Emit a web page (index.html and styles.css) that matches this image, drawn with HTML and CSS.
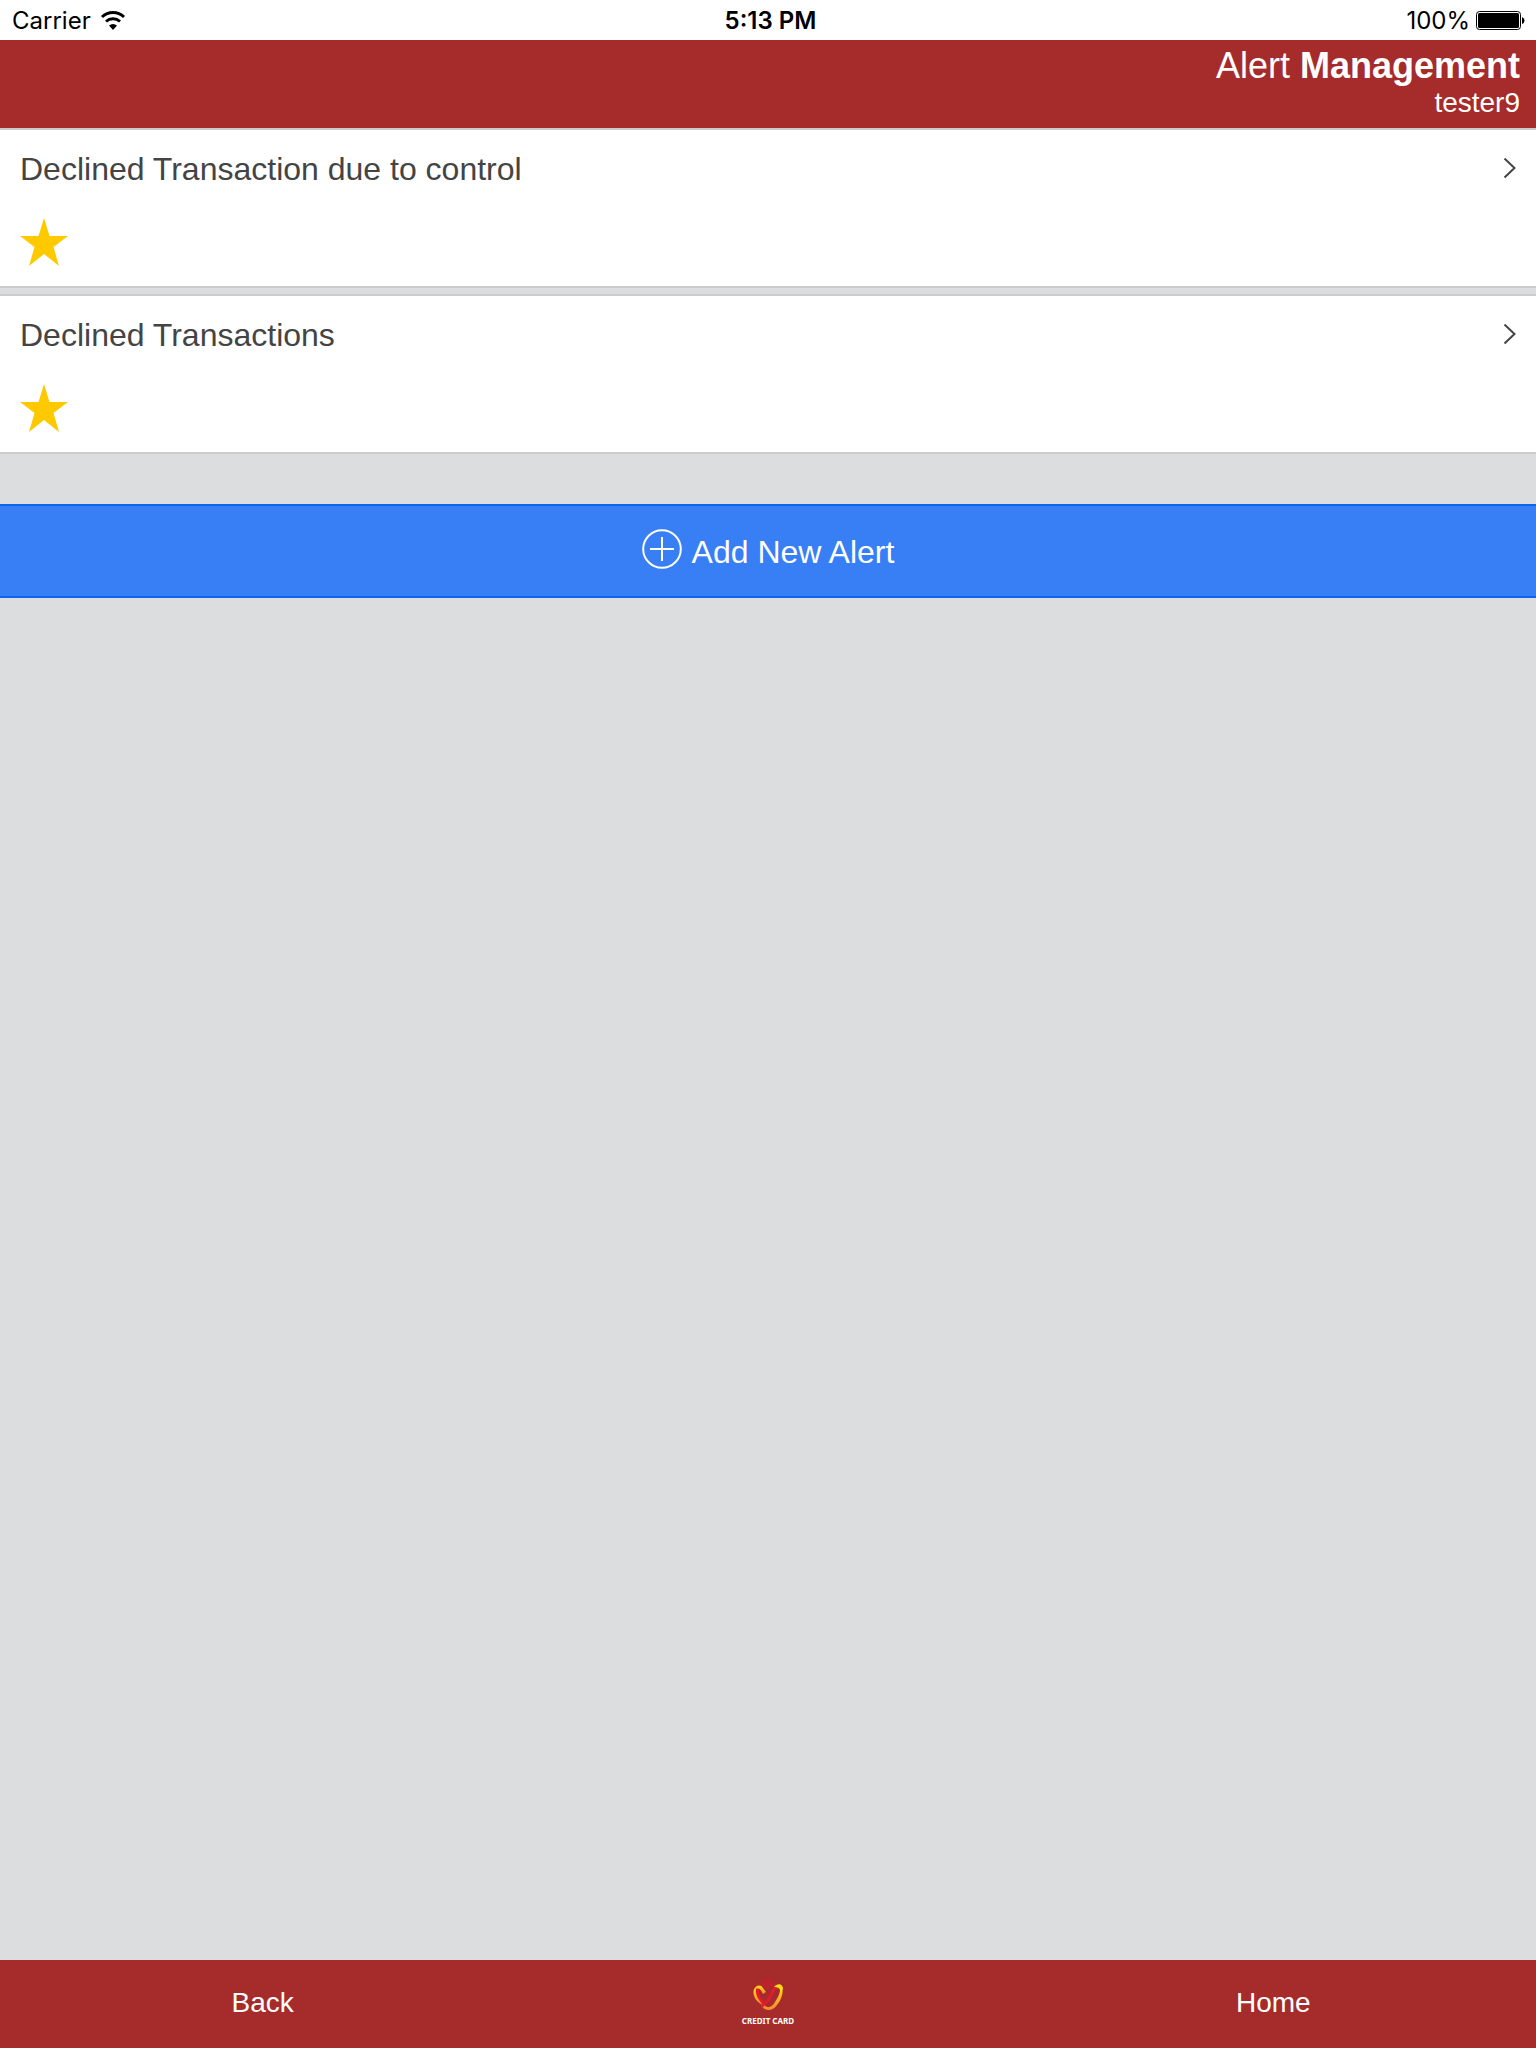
FILE: index.html
```html
<!DOCTYPE html>
<html lang="en">
  <head>
    <meta charset="UTF-8" />
    <meta name="viewport" content="width=device-width, initial-scale=1.0"/>
    <title>Alert Management</title>
    <link rel="stylesheet" href="styles.css">
  </head>
  <body>
    <div class="status-bar">
      <div class="status-left">
        <span>Carrier</span>
        <svg class="wifi" viewBox="0 0 26 20" aria-hidden="true">
          <path d="M2 6A16 16 0 0 1 24 6" fill="none" stroke="#000" stroke-width="3"/>
          <path d="M6 10.500A10.500 10.500 0 0 1 20 10.500" fill="none" stroke="#000" stroke-width="3"/>
          <path d="M9 14.500A6 6 0 0 1 17 14.500L13 19Z"/>
        </svg>
      </div>
      <div class="status-time">5:13 PM</div>
      <div class="status-right">
        <span>100%</span>
        <svg class="battery" viewBox="0 0 50 20" aria-hidden="true">
          <rect x="1.500" y="0.500" width="44" height="18" rx="3" fill="none" stroke="#000"/>
          <rect x="3" y="2" width="41" height="15" rx="1.500"/>
          <path d="M47 6q2.500 1 2.500 3.500t-2.500 3.500z"/>
        </svg>
      </div>
    </div>

    <header class="header">
      <h1>Alert <strong>Management</strong></h1>
      <p class="user">tester9</p>
    </header>

    <main class="content">
      <div class="list">
        <a class="card" href="#">
          <span class="card-top">
            <span class="title">Declined Transaction due to control</span>
            <svg class="chevron" viewBox="0 0 14 22" aria-hidden="true"><path d="M2.500 0.500l10 9.500-10 9.500"/></svg>
          </span>
          <svg class="star" viewBox="0 0 48 48" aria-hidden="true"><path d="M24 0l5.500 18H48L33.500 29 39 48 24 36 9 48l5.500-19L0 18h18.500z"/></svg>
        </a>
        <a class="card" href="#">
          <span class="card-top">
            <span class="title">Declined Transactions</span>
            <svg class="chevron" viewBox="0 0 14 22" aria-hidden="true"><path d="M2.500 0.500l10 9.500-10 9.500"/></svg>
          </span>
          <svg class="star" viewBox="0 0 48 48" aria-hidden="true"><path d="M24 0l5.500 18H48L33.500 29 39 48 24 36 9 48l5.500-19L0 18h18.500z"/></svg>
        </a>
      </div>

      <button class="add-button" type="button">
        <svg class="plus" viewBox="0 0 40 40" aria-hidden="true">
          <circle cx="20" cy="20" r="18.800"/>
          <path d="M20 8v24M8 20h24"/>
        </svg>
        <span>Add New Alert</span>
      </button>
    </main>

    <footer class="footer">
      <a href="#">Back</a>
      <div class="brand">
        <svg class="logo" viewBox="0 0 34 32" aria-hidden="true">
          <defs>
            <linearGradient id="gold" x1="0" y1="0" x2="0" y2="1">
              <stop offset="0" stop-color="#ffdc14"/>
              <stop offset="1" stop-color="#f5892f"/>
            </linearGradient>
          </defs>
          <!-- left ribbon -->
          <path d="M3 9C1 15 5 22 12 25L14 23C8 20 5 15 5 8Z" fill="url(#gold)"/>
          <path d="M5 8C4 16 8 20 12 25L14 23C10 20 7 15 8 8Z" fill="#e8192f"/>
          <path d="M3 10C4 5 10 4 12 8L15 12 12 14C10 9 7 7 3 10Z" fill="url(#gold)"/>
          <!-- right ribbon -->
          <path d="M29 5C34 9 31 19 26 25 22 31 15 32 10 26L13 25C17 29 21 27 24 22 28 16 30 11 29 5Z" fill="url(#gold)"/>
          <path d="M10 27C12 22 16 21 19 14 21 8 25 4 29 5L27 8C23 9 22 15 19 20 17 23 13 24 12 28Z" fill="#e8192f"/>
          <path d="M23 7C26 3 32 3 32 9L29 14C30 9 28 7 23 7Z" fill="#ffdc14"/>
          <g fill="#dc1630">
            <circle cx="14.500" cy="1.500" r="1.400"/><circle cx="18.500" cy="1.500" r="1.400"/>
            <circle cx="12.500" cy="4.500" r="1.400"/><circle cx="20.500" cy="4.500" r="1.400"/>
            <circle cx="16.500" cy="7.500" r="1.400"/>
          </g>
        </svg>
        <span class="brand-name">CREDIT CARD</span>
      </div>
      <a href="#">Home</a>
    </footer>
  </body>
</html>
```
FILE: styles.css
```css
* {
  box-sizing: border-box;
}
body {
  display: flex;
  flex-direction: column;
  min-height: 100vh;
  margin: 0;
  background-color: #dcddde;
  color: #444;
  font-family: "Liberation Sans", Arial, sans-serif;
}
a {
  color: inherit;
  text-decoration: none;
}
svg {
  display: block;
  flex-shrink: 0;
}

/* Status bar */
.status-bar {
  display: flex;
  align-items: center;
  height: 40px;
  padding: 1px 11px 0 12px;
  background-color: #fff;
  color: #000;
  font-family: Inter, sans-serif;
  font-size: 24px;
  line-height: 40px;
}
.status-left,
.status-right {
  display: flex;
  flex: 1;
  align-items: center;
}
.status-left {
  gap: 9px;
}
.status-right {
  justify-content: flex-end;
  gap: 5px;
}
.status-time {
  padding-left: 4px;
  font-weight: 600;
}
.wifi {
  width: 26px;
  height: 20px;
}
.battery {
  width: 50px;
  height: 20px;
}

/* Header */
.header {
  height: 88px;
  padding: 6px 16px 0;
  background-color: #a62b2b;
  color: #fff;
  text-align: right;
}
.header h1 {
  margin: 0;
  font-size: 36px;
  font-weight: normal;
  line-height: 40px;
}
.user {
  margin: 0;
  font-size: 28px;
  line-height: 34px;
}

/* Alerts */
.content {
  flex: 1;
}
.list {
  display: flex;
  flex-direction: column;
  gap: 6px;
}
.card {
  display: block;
  height: 160px;
  padding: 18px 20px;
  border-top: 2px solid #ccc;
  border-bottom: 2px solid #ccc;
  background-color: #fff;
}
.card-top {
  display: flex;
  align-items: center;
  justify-content: space-between;
  margin-bottom: 28px;
}
.title {
  font-size: 32px;
  line-height: 42px;
}
.chevron {
  width: 14px;
  height: 22px;
  fill: none;
  stroke: #444;
  stroke-width: 2;
}
.star {
  width: 48px;
  height: 48px;
  fill: #ffc900;
}
.add-button {
  display: flex;
  align-items: center;
  justify-content: center;
  gap: 10px;
  width: 100%;
  height: 94px;
  margin: 50px 0 0;
  padding: 0 0 4px;
  border: solid #0c63ee;
  border-width: 2px 0;
  background-color: #387ef5;
  color: #fff;
  font-family: inherit;
  font-size: 32px;
  line-height: 40px;
  cursor: pointer;
}
.add-button span {
  padding-top: 6px;
}
.plus {
  width: 40px;
  height: 40px;
  fill: none;
  stroke: #fff;
  stroke-width: 2;
}

/* Footer */
.footer {
  position: sticky;
  bottom: 0;
  display: flex;
  align-items: center;
  height: 88px;
  padding: 0 10px 2px;
  background-color: #a62b2b;
  color: #fff;
  font-size: 28px;
  line-height: 40px;
  text-align: center;
}
.footer > * {
  flex: 1;
}
.brand {
  display: flex;
  flex-direction: column;
  align-items: center;
  gap: 4px;
}
.logo {
  width: 34px;
  height: 32px;
}
.brand-name {
  font-family: "Noto Sans", sans-serif;
  font-size: 8px;
  font-weight: 700;
  line-height: 10px;
}
```
